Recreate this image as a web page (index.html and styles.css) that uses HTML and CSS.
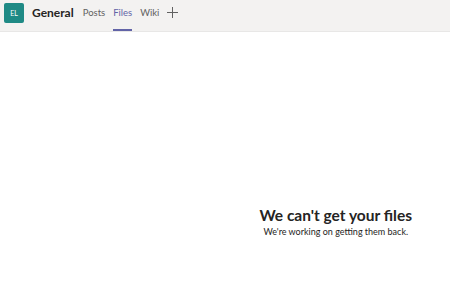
FILE: index.html
```html
<!DOCTYPE html>
<html lang="en">
<head>
    <meta charset="UTF-8">
    <title>General</title>
    <link rel="stylesheet" href="styles.css">
</head>
<body>
    <header class="bar">
        <div class="avatar">EL</div>
        <h1 class="title">General</h1>
        <nav class="tabs">
            <a>Posts</a>
            <a class="active">Files</a>
            <a>Wiki</a>
            <a class="add">
                <svg width="11" height="11" viewBox="0 0 11 11"><path d="M5.5 0v11M0 5.5h11" stroke="#616161" stroke-width="1" fill="none"/></svg>
            </a>
        </nav>
    </header>
    <main class="empty">
        <div class="msg">
            <h2>We can't get your files</h2>
            <p>We're working on getting them back.</p>
        </div>
    </main>
</body>
</html>
```

FILE: styles.css
```css
body {
    margin: 0;
    font-family: Lato, "Open Sans", sans-serif;
    background: #fff;
    color: #252423;
}
.bar {
    display: flex;
    align-items: center;
    height: 31px;
    background: #f3f2f1;
    border-bottom: 1px solid #e8e7e6;
    padding-left: 4px;
}
.avatar {
    width: 20px;
    height: 20px;
    margin-top: -6px;
    border-radius: 2px;
    background: #1f8a85;
    color: #fff;
    font-size: 7px;
    display: flex;
    align-items: center;
    justify-content: center;
}
.title {
    margin: -6px 0 0 8px;
    font-size: 12px;
    font-weight: 700;
}
.tabs {
    display: flex;
    align-self: stretch;
    gap: 8px;
    margin-left: 9px;
}
.tabs a {
    display: flex;
    align-items: center;
    padding-bottom: 5px;
    font-size: 9.5px;
    color: #616161;
    border-bottom: 2px solid transparent;
}
.tabs .active {
    color: #6264a7;
    border-bottom-color: #6264a7;
}
.empty {
    display: flex;
    justify-content: flex-end;
    padding: 173px 38px 0 0;
}
.msg {
    text-align: center;
}
.msg h2 {
    margin: 0;
    font-size: 15.5px;
    font-weight: 700;
    line-height: 20px;
}
.msg p {
    margin: 0;
    font-size: 9px;
    line-height: 14px;
}
```
